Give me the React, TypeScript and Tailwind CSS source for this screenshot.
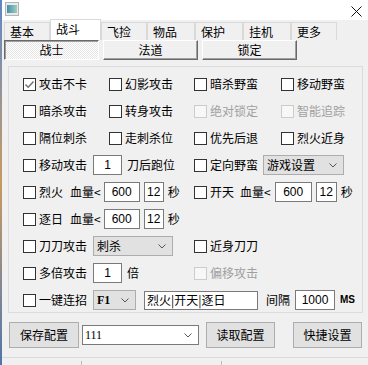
import React from "react";

type CheckProps = {
  label: string;
  checked?: boolean;
  disabled?: boolean;
  className?: string;
};

const Check = ({ label, checked, disabled, className = "" }: CheckProps) => (
  <div className={`flex h-[20px] items-center ${className}`}>
    <span
      className={`flex h-[13px] w-[13px] shrink-0 items-center justify-center border ${
        disabled ? "border-[#cccccc] bg-[#f7f7f7]" : "border-[#333333] bg-white"
      }`}
    >
      {checked && (
        <svg width="11" height="11" viewBox="0 0 11 11">
          <path d="M1.5 5.5 L4.2 8.2 L9.5 2.5" fill="none" stroke="#6e6e6e" strokeWidth="1.4" />
        </svg>
      )}
    </span>
    <span className={`ml-[3px] whitespace-nowrap ${disabled ? "text-[#a0a0a0]" : "text-black"}`}>{label}</span>
  </div>
);

const Chevron = () => (
  <svg width="8" height="5" viewBox="0 0 8 5" className="shrink-0">
    <path d="M0.5 0.5 L4 4 L7.5 0.5" fill="none" stroke="#555555" strokeWidth="1" />
  </svg>
);

const NumBox = ({ value, className = "" }: { value: string; className?: string }) => (
  <div
    className={`flex h-[20px] items-center justify-center border border-[#7a7a7a] bg-white font-['Liberation_Sans',sans-serif] text-[12px] text-black ${className}`}
  >
    {value}
  </div>
);

const Select = ({ value, className = "", valueClass = "" }: { value: string; className?: string; valueClass?: string }) => (
  <div
    className={`flex h-[20px] items-center justify-between border border-[#adadad] bg-[#e1e1e1] pl-[3px] pr-[6px] ${className}`}
  >
    <span className={`whitespace-nowrap ${valueClass}`}>{value}</span>
    <Chevron />
  </div>
);

const Tab = ({ label, w, active }: { label: string; w: string; active?: boolean }) => (
  <div
    className={`flex items-center border-l border-r border-t border-[#d9d9d9] pl-[5px] ${w} ${
      active ? "h-[21px] bg-white pb-[3px]" : "h-[18px] bg-[#f0f0f0]"
    }`}
  >
    {label}
  </div>
);

const BevelButton = ({ label, pressed }: { label: string; pressed?: boolean }) => (
  <div
    className={`flex h-[20px] w-[95px] items-center justify-center border ${
      pressed
        ? "border-b-white border-l-[#696969] border-r-white border-t-[#696969] bg-[repeating-conic-gradient(#ffffff_0_25%,#e6e6e6_0_50%)] bg-[length:2px_2px] shadow-[inset_1px_1px_0_#a0a0a0]"
        : "border-b-[#696969] border-l-white border-r-[#696969] border-t-white bg-[#f0f0f0] shadow-[inset_-1px_-1px_0_#a0a0a0]"
    }`}
  >
    {label}
  </div>
);

const PushButton = ({ label, className = "" }: { label: string; className?: string }) => (
  <div
    className={`flex h-[26px] items-center justify-center border border-[#adadad] bg-[#e1e1e1] ${className}`}
  >
    {label}
  </div>
);

export default function App() {
  return (
    <div className="flex h-[365px] w-[368px] overflow-hidden bg-[#f0f0f0] font-['Noto_Sans_CJK_SC',sans-serif] text-[12px] leading-none text-black">
      {/* desktop behind the window */}
      <div className="h-full w-[2px] bg-gradient-to-b from-[#5d86c4] via-[#c89a5c] to-[#4f74ad]" />

      <div className="flex w-[366px] flex-col">
        {/* title bar */}
        <div className="flex h-[20px] items-center justify-between bg-white">
          <div className="ml-[3px] mt-[-2px] flex h-[14px] w-[14px] items-center justify-center border border-[#b4b4b4] bg-[#e9e9e9]">
            <div className="h-[8px] w-[10px] bg-gradient-to-r from-[#3f8fb0] to-[#9fcfb8]" />
          </div>
          <svg width="11" height="11" viewBox="0 0 11 11" className="mr-[6px] mt-[2px]">
            <path d="M0.5 0.5 L10.5 10.5 M10.5 0.5 L0.5 10.5" stroke="#111111" strokeWidth="1" />
          </svg>
        </div>

        {/* tabs */}
        <div className="flex h-[20px] items-end pl-[2px]">
          <Tab label="基本" w="w-[46px]" />
          <Tab label="战斗" w="w-[51px]" active />
          <Tab label="飞捡" w="w-[46px]" />
          <Tab label="物品" w="w-[48px]" />
          <Tab label="保护" w="w-[48px]" />
          <Tab label="挂机" w="w-[48px]" />
          <Tab label="更多" w="w-[46px]" />
        </div>

        {/* class buttons */}
        <div className="flex gap-[4px] pl-[2px]">
          <BevelButton label="战士" pressed />
          <BevelButton label="法道" />
          <BevelButton label="锁定" />
        </div>

        {/* group box */}
        <div className="ml-[6px] mt-[6px] flex w-[355px] flex-col gap-[7px] border border-[#dcdcdc] pb-[2px] pl-[14px] pt-[7px]">
          <div className="flex h-[20px] items-center">
            <div className="flex w-[171px]">
              <Check label="攻击不卡" checked className="w-[86px]" />
              <Check label="幻影攻击" />
            </div>
            <Check label="暗杀野蛮" className="w-[87px]" />
            <Check label="移动野蛮" />
          </div>

          <div className="flex h-[20px] items-center">
            <div className="flex w-[171px]">
              <Check label="暗杀攻击" className="w-[86px]" />
              <Check label="转身攻击" />
            </div>
            <Check label="绝对锁定" disabled className="w-[87px]" />
            <Check label="智能追踪" disabled />
          </div>

          <div className="flex h-[20px] items-center">
            <div className="flex w-[171px]">
              <Check label="隔位刺杀" className="w-[86px]" />
              <Check label="走刺杀位" />
            </div>
            <Check label="优先后退" className="w-[87px]" />
            <Check label="烈火近身" />
          </div>

          <div className="flex h-[20px] items-center">
            <div className="flex w-[171px] items-center">
              <Check label="移动攻击" />
              <NumBox value="1" className="ml-[6px] w-[29px]" />
              <span className="ml-[5px]">刀后跑位</span>
            </div>
            <Check label="定向野蛮" />
            <Select value="游戏设置" className="ml-[5px] w-[81px]" />
          </div>

          <div className="flex h-[20px] items-center">
            <div className="flex w-[171px] items-center">
              <Check label="烈火" />
              <span className="ml-[7px]">血量&lt;</span>
              <NumBox value="600" className="ml-[3px] w-[36px]" />
              <NumBox value="12" className="ml-[4px] w-[20px]" />
              <span className="ml-[4px]">秒</span>
            </div>
            <Check label="开天" />
            <span className="ml-[6px]">血量&lt;</span>
            <NumBox value="600" className="ml-[4px] w-[37px]" />
            <NumBox value="12" className="ml-[4px] w-[21px]" />
            <span className="ml-[4px]">秒</span>
          </div>

          <div className="flex h-[20px] items-center">
            <Check label="逐日" />
            <span className="ml-[7px]">血量&lt;</span>
            <NumBox value="600" className="ml-[3px] w-[36px]" />
            <NumBox value="12" className="ml-[4px] w-[20px]" />
            <span className="ml-[4px]">秒</span>
          </div>

          <div className="flex h-[20px] items-center">
            <div className="flex w-[171px] items-center">
              <Check label="刀刀攻击" />
              <Select value="刺杀" className="ml-[6px] w-[80px]" />
            </div>
            <Check label="近身刀刀" />
          </div>

          <div className="flex h-[20px] items-center">
            <div className="flex w-[171px] items-center">
              <Check label="多倍攻击" />
              <NumBox value="1" className="ml-[6px] w-[29px]" />
              <span className="ml-[5px]">倍</span>
            </div>
            <Check label="偏移攻击" disabled />
          </div>

          <div className="flex h-[20px] items-center">
            <Check label="一键连招" />
            <Select
              value="F1"
              className="ml-[6px] h-[19px] w-[43px]"
              valueClass="font-['Liberation_Serif',serif] font-bold"
            />
            <div className="ml-[8px] flex h-[19px] w-[114px] items-center border border-[#7a7a7a] bg-white pl-[2px]">
              烈火|开天|逐日
            </div>
            <span className="ml-[8px]">间隔</span>
            <NumBox value="1000" className="ml-[5px] h-[19px] w-[40px]" />
            <span className="ml-[5px] font-['Liberation_Sans',sans-serif] text-[10px] font-bold">MS</span>
          </div>
        </div>

        {/* bottom buttons */}
        <div className="mt-[9px] flex h-[26px] items-center pl-[7px]">
          <PushButton label="保存配置" className="w-[70px]" />
          <div className="ml-[3px] flex h-[20px] w-[117px] items-center justify-between border border-[#7a7a7a] bg-white pl-[2px] pr-[6px]">
            <span className="font-['Liberation_Serif',serif] text-[12px]">111</span>
            <Chevron />
          </div>
          <PushButton label="读取配置" className="ml-[7px] w-[69px]" />
          <PushButton label="快捷设置" className="ml-[18px] w-[69px]" />
        </div>

        {/* status bar (cut off at window edge) */}
        <div className="mt-[9px] flex h-[8px] border-t border-[#dadada] pt-[3px]">
          <div className="w-[80px] border-r border-[#bdbdbd]" />
          <div className="w-[140px] border-r border-[#bdbdbd]" />
          <div className="flex-1" />
        </div>
      </div>
    </div>
  );
}
